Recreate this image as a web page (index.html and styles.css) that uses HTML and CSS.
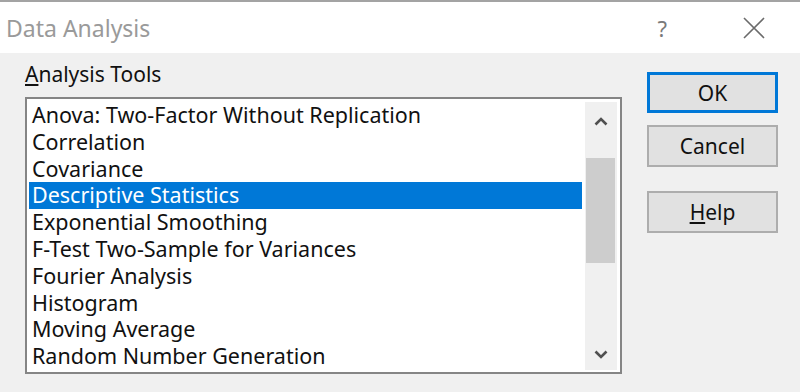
FILE: index.html
```html
<!DOCTYPE html>
<html lang="en">
<head>
    <meta charset="UTF-8">
    <title>Data Analysis</title>
    <link rel="stylesheet" href="styles.css">
</head>
<body>
    <div class="titlebar">
        <span class="title">Data Analysis</span>
        <span class="help-q">?</span>
        <span class="close">
            <svg width="22" height="22" viewBox="0 0 22 22">
                <path d="M1 1 L21 21 M21 1 L1 21" stroke="#6b6b6b" stroke-width="1.6" fill="none"/>
            </svg>
        </span>
    </div>
    <div class="content">
        <div class="left">
            <div class="label"><u>A</u>nalysis Tools</div>
            <div class="listbox">
                <div class="items">
                    <div class="item">Anova: Two-Factor Without Replication</div>
                    <div class="item">Correlation</div>
                    <div class="item">Covariance</div>
                    <div class="item selected">Descriptive Statistics</div>
                    <div class="item">Exponential Smoothing</div>
                    <div class="item">F-Test Two-Sample for Variances</div>
                    <div class="item">Fourier Analysis</div>
                    <div class="item">Histogram</div>
                    <div class="item">Moving Average</div>
                    <div class="item">Random Number Generation</div>
                </div>
                <div class="scrollbar">
                    <div class="arrow">
                        <svg width="14" height="9" viewBox="0 0 14 9">
                            <polyline points="1.5,7.5 7,2 12.5,7.5" stroke="#505050" stroke-width="2.6" fill="none"/>
                        </svg>
                    </div>
                    <div class="track">
                        <div class="thumb"></div>
                    </div>
                    <div class="arrow down">
                        <svg width="14" height="9" viewBox="0 0 14 9">
                            <polyline points="1.5,1.5 7,7 12.5,1.5" stroke="#505050" stroke-width="2.6" fill="none"/>
                        </svg>
                    </div>
                </div>
            </div>
        </div>
        <div class="buttons">
            <div class="btn default">OK</div>
            <div class="btn">Cancel</div>
            <div class="btn help"><u>H</u>elp</div>
        </div>
    </div>
</body>
</html>
```

FILE: styles.css
```css
*{margin:0;box-sizing:border-box}
body{
    background-color: #f0f0f0;
    font-family: "Noto Sans", "Open Sans", sans-serif;
    color: #111;
    width: 800px;
    height: 392px;
    overflow: hidden;
}
.titlebar{
    border-top: 2px solid #a3a3a3;
    background-color: white;
    height: 53px;
    display: flex;
    align-items: center;
    padding-left: 6px;
}
.title{
    font-size: 23px;
    color: #9a9a9a;
    flex: 1;
}
.help-q{
    font-size: 22px;
    color: #7a7a7a;
    margin-right: 76px;
}
.close{
    display: flex;
    margin-right: 35px;
}
.content{
    display: flex;
    padding: 8px 0 0 25px;
}
.left{
    width: 597px;
}
.label{
    font-size: 21px;
    line-height: 27px;
    height: 36px;
}
.listbox{
    border: 2px solid #858585;
    background-color: white;
    height: 277px;
    display: flex;
    padding: 3px 3px 2px 2px;
}
.items{
    flex: 1;
    font-size: 21.5px;
    padding-right: 3px;
}
.item{
    height: 26.8px;
    line-height: 26.8px;
    padding-left: 3px;
    white-space: nowrap;
}
.selected{
    background-color: #0078d7;
    color: white;
}
.scrollbar{
    width: 32px;
    background-color: #f0f0f0;
    display: flex;
    flex-direction: column;
}
.arrow{
    height: 38px;
    display: flex;
    align-items: center;
    justify-content: center;
}
.down{
    padding-top: 6px;
}
.track{
    flex: 1;
    padding-top: 18px;
}
.thumb{
    height: 105px;
    background-color: #cdcdcd;
    margin: 0 2px 0 1px;
}
.buttons{
    display: flex;
    flex-direction: column;
    margin-left: 25px;
    padding-top: 11px;
}
.btn{
    width: 131px;
    height: 42px;
    background-color: #e1e1e1;
    border: 2px solid #adadad;
    font-size: 21px;
    display: flex;
    align-items: center;
    justify-content: center;
    margin-bottom: 12px;
}
.default{
    border: 3px solid #0078d7;
    height: 41px;
}
.help{
    margin-top: 12px;
}
```
